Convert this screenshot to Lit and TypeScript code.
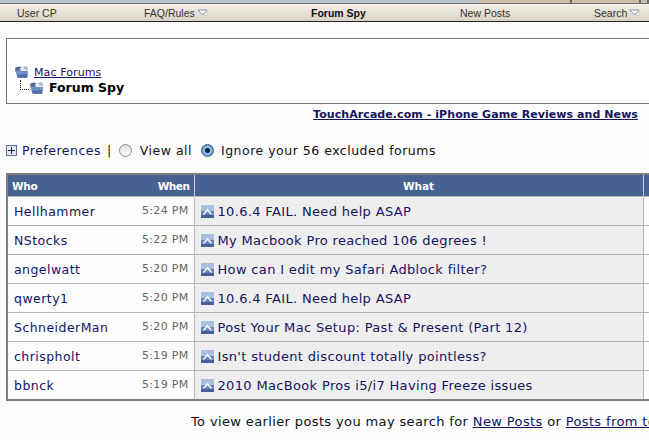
import { LitElement, html, css, svg } from "lit";
import { customElement } from "lit/decorators.js";

const rows = [
  ["Hellhammer", "5:24 PM", "10.6.4 FAIL. Need help ASAP"],
  ["NStocks", "5:22 PM", "My Macbook Pro reached 106 degrees !"],
  ["angelwatt", "5:20 PM", "How can I edit my Safari Adblock filter?"],
  ["qwerty1", "5:20 PM", "10.6.4 FAIL. Need help ASAP"],
  ["SchneiderMan", "5:20 PM", "Post Your Mac Setup: Past & Present (Part 12)"],
  ["chrispholt", "5:19 PM", "Isn't student discount totally pointless?"],
  ["bbnck", "5:19 PM", "2010 MacBook Pros i5/i7 Having Freeze issues"],
];

const folder = svg`<svg class="folder" viewBox="0 0 16 14">
  <path d="M1 4 L2 2 L5 1 L8 2 L8 4 L13 4 L14 6 L5 12 Z" fill="#55688f"/>
  <path d="M6 4 L9 1 L14 1 L15 3 L14 8 L9 8 Z" fill="#e6ebf2"/>
  <path d="M10 1 L14 1 L15 3 L14 5 L11 4 Z" fill="#aeb8c8"/>
  <path d="M1 5 L8 6 L15 6 L14 13 L4 13 Z" fill="#6f90c6"/>
  <path d="M3 10 L14.5 9 L14 13 L4 13 Z" fill="#4f6ea8"/>
</svg>`;
const arrow = svg`<svg class="up" viewBox="0 0 13 13">
  <rect width="13" height="13" fill="#a8bfdf"/>
  <rect y="6" width="13" height="7" fill="#6484bb"/>
  <rect y="10" width="13" height="3" fill="#44619a"/>
  <path d="M1.5 9.5 L6.5 3.5 L11.5 9.5 L9.5 9.5 L6.5 6.2 L3.5 9.5 Z" fill="#f3f6fb"/>
</svg>`;
const tri = svg`<svg class="tri" viewBox="0 0 11 7"><path d="M1 1 H10 L5.5 6 Z" fill="#fff" stroke="#7f95ad"/></svg>`;

@customElement("app-root")
export class AppRoot extends LitElement {
  static styles = css`
    :host { display: block; width: 649px; height: 440px; overflow: hidden; background: #fcfcfc;
      font-family: "DejaVu Sans", Verdana, sans-serif; color: #111; }
    a { color: #14145f; }
    .plain { text-decoration: none; }
    .strip { height: 4px; box-sizing: border-box; display: grid; grid-template-columns: 477px 95px 69px 1fr; border-bottom: 1px solid #6f7378; }
    .strip i { background: #b8c3ce; }
    .strip b { background: #c9bda8; border-right: 2px solid #6f6a60; }
    .nav { height: 18px; box-sizing: border-box; display: flex; align-items: center; border-bottom: 1px solid #222;
      background: linear-gradient(#f4f0e8, #d8d1c4); font: 10.5px "Liberation Sans", Arial, sans-serif; color: #333; }
    .nav span { white-space: nowrap; display: flex; align-items: center; gap: 2px; }
    .n1 { margin-left: 17px; width: 127px; }
    .n2 { width: 167px; }
    .n3 { width: 149px; font-weight: bold; color: #111; }
    .n4 { width: 134px; }
    .tri { width: 11px; height: 7px; }
    .crumb { margin: 16px 0 0 6px; height: 66px; width: 650px; box-sizing: border-box; border: 1px solid #777; border-right: 0;
      background: #fff; display: flex; flex-direction: column; justify-content: flex-end; padding: 0 0 8px 7px; }
    .c1 { display: flex; align-items: center; gap: 5px; height: 16px; font-size: 11px; letter-spacing: .1px; }
    .c2 { display: flex; align-items: center; height: 15px; font-size: 12.5px; font-weight: bold; margin-left: 6px; color: #000; }
    .dots { width: 8px; height: 9px; margin-bottom: 6px; border-left: 1px dotted #222; border-bottom: 1px dotted #222; }
    .folder { width: 15px; height: 14px; flex: none; }
    .c2 .folder { margin-right: 5px; }
    .ad { text-align: right; font-size: 11px; letter-spacing: .07px; font-weight: bold; margin: 4px 11px 0 0; line-height: 14px; }
    .prefs { display: flex; align-items: center; margin: 20px 0 0 6px; height: 16px; font-size: 12.5px; letter-spacing: .5px; white-space: nowrap; }
    .plus { width: 9px; height: 9px; border: 1px solid #5a6e96; background: #dfe6f2; margin-right: 5px; position: relative; }
    .plus::before { content: ""; position: absolute; left: 1px; right: 1px; top: 4px; height: 1px; background: #223; }
    .plus::after { content: ""; position: absolute; top: 1px; bottom: 1px; left: 4px; width: 1px; background: #223; }
    .sep { margin: 0 7px 0 6px; }
    .radio { width: 13px; height: 13px; border-radius: 50%; border: 1px solid #888; background: linear-gradient(#ddd, #fff); margin-right: 8px; box-sizing: border-box; flex: none; }
    .radio.on { background: radial-gradient(circle, #123 0 2px, #9cc2ec 3px, #3f7fc6 7px); border-color: #456; margin-left: 9px; margin-right: 7px; }
    table.t { border-collapse: collapse; margin: 15px 0 0 6px; width: 700px; table-layout: fixed; border: 2px solid #7e7e7e; border-right: 0; font-size: 13px; letter-spacing: .34px; }
    .cw { width: 120px; }
    .ct { width: 67px; }
    .cm { width: 449px; }
    th { background: #476191; color: #fff; font-size: 10.5px; height: 21px; padding: 0 4px; letter-spacing: -.1px; border-left: 1px solid #c9d0dc; }
    td { height: 28px; padding: 0; border-top: 1px solid #b5b5b5; border-left: 1px solid #b5b5b5; white-space: nowrap; overflow: hidden; background: #fcfcfc; }
    th.who, td.who { border-left: 0; }
    th.when, td.when { border-left: 0; }
    td.who { padding-left: 6px; color: #14145f; text-align: left; font-size: 12.5px; letter-spacing: .45px; }
    th.who { padding-left: 4px; text-align: left; letter-spacing: -.25px; }
    td.when { height: 26px; text-align: right; padding: 0 5px 2px 0; color: #666; font-size: 11px; letter-spacing: .3px; }
    th.when { text-align: right; padding-right: 4px; letter-spacing: -.45px; }
    td.what { background: #eeeeee; color: #14145f; }
    th.what { text-align: center; }
    td.what div { display: flex; align-items: center; gap: 4px; padding-left: 6px; }
    .up { width: 13px; height: 13px; flex: none; margin-top: 1px; }
    .foot { margin: 13px 0 0 191px; font-size: 13px; letter-spacing: .37px; white-space: nowrap; }
  `;
  render() {
    return html`
      <div class="strip"><i></i><b></b><b></b><b></b></div>
      <div class="nav">
        <span class="n1">User CP</span>
        <span class="n2">FAQ/Rules ${tri}</span>
        <span class="n3">Forum Spy</span>
        <span class="n4">New Posts</span>
        <span>Search ${tri}</span>
      </div>
      <div class="crumb">
        <div class="c1">${folder}<a href="#">Mac Forums</a></div>
        <div class="c2"><span class="dots"></span>${folder}Forum Spy</div>
      </div>
      <div class="ad"><a href="#">TouchArcade.com - iPhone Game Reviews and News</a></div>
      <div class="prefs">
        <span class="plus"></span><a class="plain" href="#">Preferences</a><span class="sep">|</span>
        <span class="radio"></span>View all<span class="radio on"></span>Ignore your 56 excluded forums
      </div>
      <table class="t">
        <colgroup><col class="cw"><col class="ct"><col class="cm"><col></colgroup>
        <tr><th class="who">Who</th><th class="when">When</th><th class="what">What</th><th></th></tr>
        ${rows.map((r) => html`<tr><td class="who">${r[0]}</td><td class="when">${r[1]}</td><td class="what"><div>${arrow}${r[2]}</div></td><td></td></tr>`)}
      </table>
      <div class="foot">To view earlier posts you may search for <a href="#">New Posts</a> or <a href="#">Posts from today</a></div>
    `;
  }
}
